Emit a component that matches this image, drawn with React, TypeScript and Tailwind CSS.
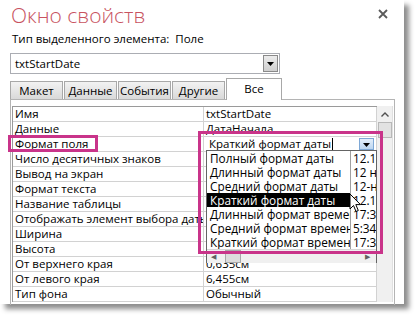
import React from "react";

const rows: { label: string; value: string }[] = [
  { label: "Имя", value: "txtStartDate" },
  { label: "Данные", value: "ДатаНачала" },
  { label: "Формат поля", value: "" },
  { label: "Число десятичных знаков", value: "" },
  { label: "Вывод на экран", value: "" },
  { label: "Формат текста", value: "" },
  { label: "Название таблицы", value: "" },
  { label: "Отображать элемент выбора даты", value: "" },
  { label: "Ширина", value: "" },
  { label: "Высота", value: "" },
  { label: "От верхнего края", value: "0,635см" },
  { label: "От левого края", value: "6,455см" },
  { label: "Тип фона", value: "Обычный" },
];

const formats: { name: string; sample: string; selected?: boolean }[] = [
  { name: "Полный формат даты", sample: "12.11.2015" },
  { name: "Длинный формат даты", sample: "12 ноября 2015" },
  { name: "Средний формат даты", sample: "12-ноя-15" },
  { name: "Краткий формат даты", sample: "12.11.2015", selected: true },
  { name: "Длинный формат времени", sample: "17:34:23" },
  { name: "Средний формат времени", sample: "5:34 PM" },
  { name: "Краткий формат времени", sample: "17:34" },
];

const tabs = ["Макет", "Данные", "События", "Другие"];

function DownTriangle({ className }: { className?: string }) {
  return (
    <svg width="7" height="4" viewBox="0 0 7 4" className={className}>
      <path d="M0 0 H7 L3.5 4 Z" fill="#000" />
    </svg>
  );
}

function FormatCombo() {
  return (
    <div className="flex h-full items-center">
      <span className="pl-[3px] whitespace-nowrap">Краткий формат даты</span>
      <span className="ml-[1px] h-[12px] w-[1px] bg-black" />
      <div className="ml-auto mr-[2px] flex h-[12px] w-[15px] items-center justify-center border border-[#7ea8d6] bg-gradient-to-b from-[#e3eefa] to-[#bcd5f0]">
        <DownTriangle className="mt-[2px]" />
      </div>
    </div>
  );
}

function FormatList() {
  return (
    <div className="absolute left-[206px] top-[150px] flex h-[113px] w-[171px] flex-col border border-[#646464] bg-white text-[11.8px]">
      {formats.map((f) => (
        <div key={f.name} className="flex h-[14px] leading-[14px]">
          <div
            className={
              f.selected
                ? "w-[143px] overflow-hidden whitespace-nowrap bg-black pl-[3px] text-white"
                : "w-[143px] overflow-hidden whitespace-nowrap pl-[3px] text-black"
            }
          >
            {f.name}
          </div>
          <div className="flex-1 overflow-hidden whitespace-nowrap border-l border-[#a0a0a0] pl-[2px] text-black">
            {f.sample}
          </div>
        </div>
      ))}
      <div className="mt-auto flex h-[14px] items-center border-t border-[#d6d6d6] bg-[#f0f0f0]">
        <span className="ml-[4px] text-[7px] leading-none text-[#606060]">◀</span>
        <div className="ml-[9px] h-[13px] w-[16px] border border-[#a8a8a8] bg-[#dcdcdc]" />
        <span className="ml-auto mr-[6px] text-[7px] leading-none text-[#606060]">▶</span>
      </div>
    </div>
  );
}

function Cursor() {
  return (
    <svg
      width="13"
      height="20"
      viewBox="0 0 13 20"
      className="absolute left-[349px] top-[193px]"
    >
      <path
        d="M1 1 V16 L4.5 12.5 L7 18.5 L9.3 17.5 L6.8 11.6 H11.5 Z"
        fill="#fff"
        stroke="#000"
        strokeWidth="1"
        strokeLinejoin="round"
      />
    </svg>
  );
}

export default function App() {
  return (
    <div className="h-[317px] w-[419px] bg-white font-['Open_Sans',sans-serif] text-[11.5px] text-black">
      <div className="relative h-[304px] w-[404px] bg-white shadow-[5px_5px_5px_rgba(0,0,0,0.45)]">
        {/* Header */}
        <div className="flex h-[31px] items-start justify-between pl-[11px] pr-[16px]">
          <div className="text-[21px] font-light leading-[30px] text-[#c8535f]">
            Окно свойств
          </div>
          <svg width="10" height="10" viewBox="0 0 10 10" className="mt-[9px]">
            <path d="M1 1 L9 9 M9 1 L1 9" stroke="#5a5a5a" strokeWidth="1.8" />
          </svg>
        </div>
        <div className="h-[16px] pl-[12px] leading-[16px] whitespace-pre">
          {"Тип выделенного элемента:  Поле"}
        </div>

        {/* Selection combo */}
        <div className="ml-[10px] mt-[6px] flex h-[21px] w-[270px] items-center border border-[#abadb3] bg-white">
          <span className="pl-[4px]">txtStartDate</span>
          <div className="ml-auto mr-[1px] flex h-[17px] w-[15px] items-center justify-center border border-[#8a8a8a] bg-gradient-to-b from-[#ececec] to-[#cfcfcf]">
            <DownTriangle />
          </div>
        </div>

        {/* Tabs */}
        <div className="ml-[10px] mt-[4px] flex h-[21px] items-end">
          {tabs.map((t, i) => (
            <div
              key={t}
              className={
                (i === 0 ? "" : "ml-[1px] ") +
                "flex h-[18px] w-[53px] items-center justify-center border border-b-0 border-[#a8a8a8] bg-gradient-to-b from-[#f2f2f2] to-[#d9d9d9] leading-none"
              }
            >
              {t}
            </div>
          ))}
          <div className="relative z-10 -mb-[1px] ml-[1px] flex h-[22px] w-[56px] items-start justify-center border border-b-0 border-[#a8a8a8] bg-white pt-[3px] leading-[14px]">
            Все
          </div>
        </div>

        {/* Tab panel */}
        <div className="ml-[10px] h-[206px] w-[385px] border-x border-t border-[#b4b4b4] pl-[1px] pt-[6px]">
          <div className="flex">
            <div className="w-[365px] border-l border-t border-[#9a9a9a]">
              {rows.map((r, i) => (
                <div
                  key={r.label}
                  className="flex h-[15px] border-b border-[#d2d2d2] leading-[14px]"
                >
                  <div className="w-[191px] overflow-hidden whitespace-nowrap border-r border-[#d2d2d2] pl-[2px]">
                    {r.label}
                  </div>
                  <div className="flex-1 overflow-hidden whitespace-nowrap border-r border-[#d2d2d2] pl-[2px]">
                    {i === 2 ? <FormatCombo /> : r.value}
                  </div>
                </div>
              ))}
            </div>
            <div className="flex h-[196px] w-[16px] flex-col items-center border-r border-[#e0e0e0] bg-[#f0f0f0]">
              <svg width="8" height="5" viewBox="0 0 8 5" className="mt-[6px]">
                <path d="M0.5 4.5 L4 1 L7.5 4.5" stroke="#505050" strokeWidth="1.4" fill="none" />
              </svg>
              <div className="mt-[5px] h-[16px] w-[14px] border border-[#b8b8b8] bg-[#e2e2e2]" />
            </div>
          </div>
        </div>

        {/* Overlays */}
        <FormatList />
        <div className="absolute left-[8px] top-[135px] h-[17px] w-[90px] border-[3px] border-[#c9348a]" />
        <div className="absolute left-[198px] top-[131px] h-[123px] w-[185px] border-[3px] border-[#c9348a]" />
        <Cursor />
      </div>
    </div>
  );
}
